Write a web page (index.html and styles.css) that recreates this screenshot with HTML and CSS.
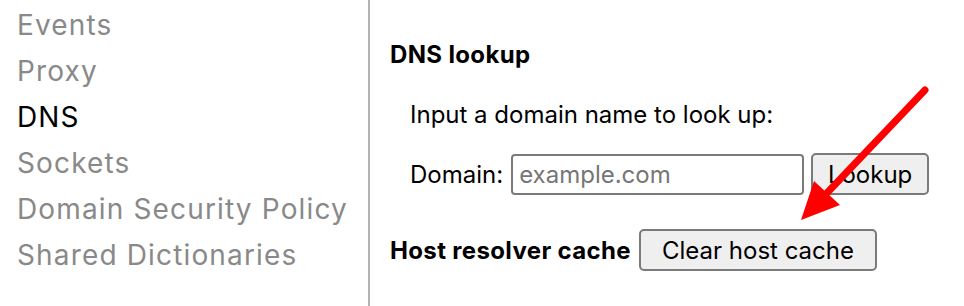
FILE: index.html
```html
<!DOCTYPE html>
<html>
<head>
<meta charset="utf-8">
<link rel="stylesheet" href="styles.css">
</head>
<body>
<div class="page">
  <nav class="sidebar">
    <div class="nav-item">Events</div>
    <div class="nav-item">Proxy</div>
    <div class="nav-item active">DNS</div>
    <div class="nav-item">Sockets</div>
    <div class="nav-item">Domain Security Policy</div>
    <div class="nav-item">Shared Dictionaries</div>
  </nav>
  <main class="content">
    <h2 class="title">DNS lookup</h2>
    <p class="hint">Input a domain name to look up:</p>
    <div class="row indent">
      <label class="label">Domain:</label>
      <input class="field" type="text" placeholder="example.com">
      <button class="btn lookup">Lookup</button>
    </div>
    <div class="row host">
      <span class="bold-label">Host resolver cache</span>
      <button class="btn clear">Clear host cache</button>
    </div>
  </main>
  <svg class="arrow" width="964" height="306" viewBox="0 0 964 306">
    <line x1="925" y1="90" x2="826" y2="194" stroke="#ff0000" stroke-width="7" stroke-linecap="round"/>
    <polygon points="801,220 814,181 840,205" fill="#ff0000"/>
  </svg>
</div>
</body>
</html>
```
FILE: styles.css
```css
html, body {
  margin: 0;
  padding: 0;
  background: #ffffff;
}
body {
  font-family: Inter, "Liberation Sans", sans-serif;
  color: #000;
}
.page {
  position: relative;
  display: flex;
  width: 964px;
  height: 306px;
  overflow: hidden;
}
.sidebar {
  width: 351px;
  padding-left: 17px;
  padding-top: 2px;
  border-right: 2px solid #b3b3b3;
  display: flex;
  flex-direction: column;
}
.nav-item {
  font-size: 28px;
  line-height: 46px;
  letter-spacing: 1.15px;
  color: #898989;
  white-space: nowrap;
}
.nav-item.active {
  color: #000;
}
.content {
  flex: 1;
  padding-left: 20px;
  padding-top: 40px;
  font-size: 24px;
}
.title {
  margin: 0;
  font-size: 24px;
  font-weight: 700;
  line-height: 29px;
  letter-spacing: 0.35px;
}
.hint {
  margin: 31px 0 0 20px;
  line-height: 29px;
}
.row {
  display: flex;
  align-items: center;
}
.indent {
  margin-top: 24px;
  margin-left: 20px;
}
.label {
  line-height: 29px;
}
.field {
  margin-left: 8px;
  width: 293px;
  height: 41px;
  box-sizing: border-box;
  border: 2px solid #7a7a7a;
  border-radius: 4px;
  padding: 0 6px;
  font-family: Inter, "Liberation Sans", sans-serif;
  font-size: 24px;
  color: #000;
  outline: none;
}
.field::placeholder {
  color: #767676;
}
.btn {
  height: 42px;
  box-sizing: border-box;
  border: 2px solid #7a7a7a;
  border-radius: 5px;
  background: #efefef;
  font-family: Inter, "Liberation Sans", sans-serif;
  font-size: 24px;
  color: #000;
  padding: 0 14px;
}
.lookup {
  margin-left: 7px;
  width: 118px;
}
.host {
  margin-top: 34px;
}
.bold-label {
  font-weight: 700;
  line-height: 29px;
  letter-spacing: 0.35px;
}
.clear {
  margin-left: 8px;
  width: 238px;
}
.arrow {
  position: absolute;
  left: 0;
  top: 0;
  pointer-events: none;
}
```
